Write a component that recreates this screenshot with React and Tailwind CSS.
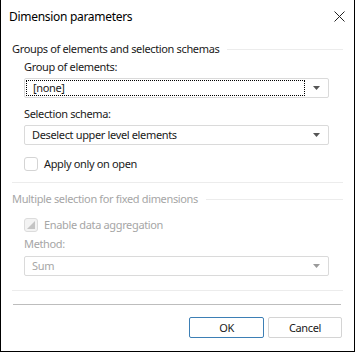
import React from 'react'

const font = { fontFamily: '"Noto Sans", "Open Sans", Arial, sans-serif' }

function Arrow({ disabled }) {
  return (
    <svg width="7" height="4" viewBox="0 0 7 4" className="shrink-0">
      <path d="M0 0h7L3.5 4z" fill={disabled ? '#9a9a9a' : '#555555'} />
    </svg>
  )
}

function Combo({ value, focused, disabled }) {
  return (
    <div className="h-[20px] flex items-center border border-[#dadada] rounded-[2px] bg-white pl-[1px] pr-[8px]">
      <div className={`flex-1 h-[16px] flex items-center pl-[6px] mr-[8px] ${focused ? 'border border-dotted border-black' : ''}`}>
        <span className={disabled ? 'text-[#a6a6a6]' : 'text-[#1a1a1a]'}>{value}</span>
      </div>
      <Arrow disabled={disabled} />
    </div>
  )
}

function GroupHeader({ children, disabled }) {
  return (
    <div className="h-[16px] flex items-center">
      <span className={disabled ? 'text-[#a6a6a6]' : 'text-[#1a1a1a]'}>{children}</span>
      <div className="flex-1 h-px bg-[#ececec] ml-[8px]" />
    </div>
  )
}

export default function App() {
  return (
    <div className="w-[355px] h-[352px] bg-white border-l border-r border-b border-black flex flex-col text-[11px] leading-[16px] tracking-[-0.35px]" style={font}>
      <div className="h-[33px] flex items-center justify-between pl-[8px] pr-[9px]">
        <span className="text-[12px] tracking-[-0.3px] text-black">Dimension parameters</span>
        <svg width="11" height="11" viewBox="0 0 11 11">
          <path d="M0.5 0.5l10 10M10.5 0.5l-10 10" stroke="#222" strokeWidth="1" />
        </svg>
      </div>

      <div className="flex flex-col pl-[11px] pr-[11px] mt-[8px]">
        <GroupHeader>Groups of elements and selection schemas</GroupHeader>
        <div className="pl-[12px] pr-[14px] flex flex-col">
          <div className="mt-[2px] h-[16px] text-[#1a1a1a]">Group of elements:</div>
          <div className="mt-[3px]"><Combo value="[none]" focused /></div>
          <div className="mt-[8px] h-[16px] text-[#1a1a1a]">Selection schema:</div>
          <div className="mt-[3px]"><Combo value="Deselect upper level elements" /></div>
          <div className="mt-[11px] h-[16px] flex items-center">
            <div className="w-[14px] h-[14px] border border-[#d4d4d4] rounded-[3px] bg-white" />
            <span className="ml-[6px] text-[#1a1a1a]">Apply only on open</span>
          </div>
        </div>
        <div className="mt-[10px] h-px bg-[#ececec]" />

        <div className="mt-[8px]"><GroupHeader disabled>Multiple selection for fixed dimensions</GroupHeader></div>
        <div className="pl-[12px] pr-[14px] flex flex-col">
          <div className="mt-[10px] h-[16px] flex items-center">
            <div className="w-[14px] h-[14px] border border-[#dcdcdc] rounded-[3px] bg-[#f3f3f3] flex items-center justify-center">
              <svg width="8" height="8" viewBox="0 0 8 8">
                <path d="M8 0V8H0z" fill="#c4c4c4" />
              </svg>
            </div>
            <span className="ml-[6px] text-[#a6a6a6]">Enable data aggregation</span>
          </div>
          <div className="mt-[3px] h-[16px] text-[#a6a6a6]">Method:</div>
          <div className="mt-[4px]"><Combo value="Sum" disabled /></div>
        </div>
        <div className="mt-[14px] h-px bg-[#ececec]" />
        <div className="mt-[13px] h-px bg-[#bdbdbd] ml-[1px] mr-[2px]" />

        <div className="mt-[12px] flex justify-end gap-[4px] pr-[1px]">
          <button className="w-[75px] h-[21px] border border-[#3d7fb5] rounded-[2px] bg-white text-[#1a1a1a]">OK</button>
          <button className="w-[74px] h-[21px] border border-[#d4d4d4] rounded-[2px] bg-white text-[#1a1a1a]">Cancel</button>
        </div>
      </div>
    </div>
  )
}
